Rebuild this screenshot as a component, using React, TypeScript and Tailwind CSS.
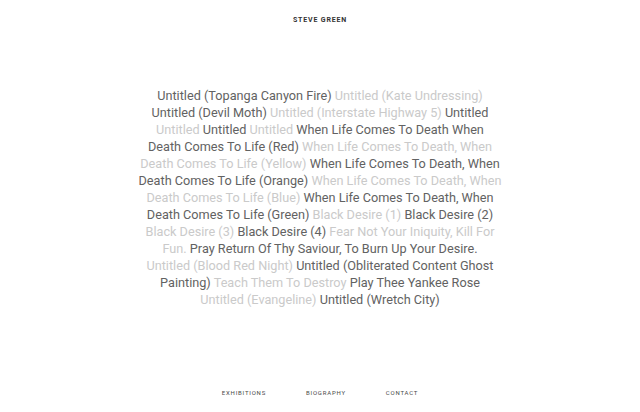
type Seg = [string, boolean];

// titles wrap the same way as on the live site, so each row is listed out
const rows: Seg[][] = [
  [["Untitled (Topanga Canyon Fire)", true], ["Untitled (Kate Undressing)", false]],
  [["Untitled (Devil Moth)", true], ["Untitled (Interstate Highway 5)", false], ["Untitled", true]],
  [["Untitled", false], ["Untitled", true], ["Untitled", false], ["When Life Comes To Death When", true]],
  [["Death Comes To Life (Red)", true], ["When Life Comes To Death, When", false]],
  [["Death Comes To Life (Yellow)", false], ["When Life Comes To Death, When", true]],
  [["Death Comes To Life (Orange)", true], ["When Life Comes To Death, When", false]],
  [["Death Comes To Life (Blue)", false], ["When Life Comes To Death, When", true]],
  [["Death Comes To Life (Green)", true], ["Black Desire (1)", false], ["Black Desire (2)", true]],
  [["Black Desire (3)", false], ["Black Desire (4)", true], ["Fear Not Your Iniquity, Kill For", false]],
  [["Fun.", false], ["Pray Return Of Thy Saviour, To Burn Up Your Desire.", true]],
  [["Untitled (Blood Red Night)", false], ["Untitled (Obliterated Content Ghost", true]],
  [["Painting)", true], ["Teach Them To Destroy", false], ["Play Thee Yankee Rose", true]],
  [["Untitled (Evangeline)", false], ["Untitled (Wretch City)", true]],
];

export default function App() {
  return (
    <div className="h-[412px] w-full bg-white flex flex-col font-['Roboto',sans-serif]">
      <header className="h-[40px] flex items-center justify-center">
        <a href="#" className="text-[7px] font-bold tracking-[0.12em] text-[#333]">
          STEVE GREEN
        </a>
      </header>

      <main className="flex-1 pt-[47px]">
        <div className="flex flex-col items-center text-[12.7px] leading-[17px]">
          {rows.map((row, i) => (
            <div key={i} className="whitespace-nowrap">
              {row.map(([title, dark], j) => (
                <span key={j}>
                  {j > 0 && " "}
                  <a href="#" className={dark ? "text-[#626262]" : "text-[#cacaca]"}>
                    {title}
                  </a>
                </span>
              ))}
            </div>
          ))}
        </div>
      </main>

      <footer className="h-[40px] flex items-center justify-center gap-[40px] text-[6px] tracking-[0.13em] text-[#4a4a4a]">
        <a href="#">EXHIBITIONS</a>
        <a href="#">BIOGRAPHY</a>
        <a href="#">CONTACT</a>
      </footer>
    </div>
  );
}
